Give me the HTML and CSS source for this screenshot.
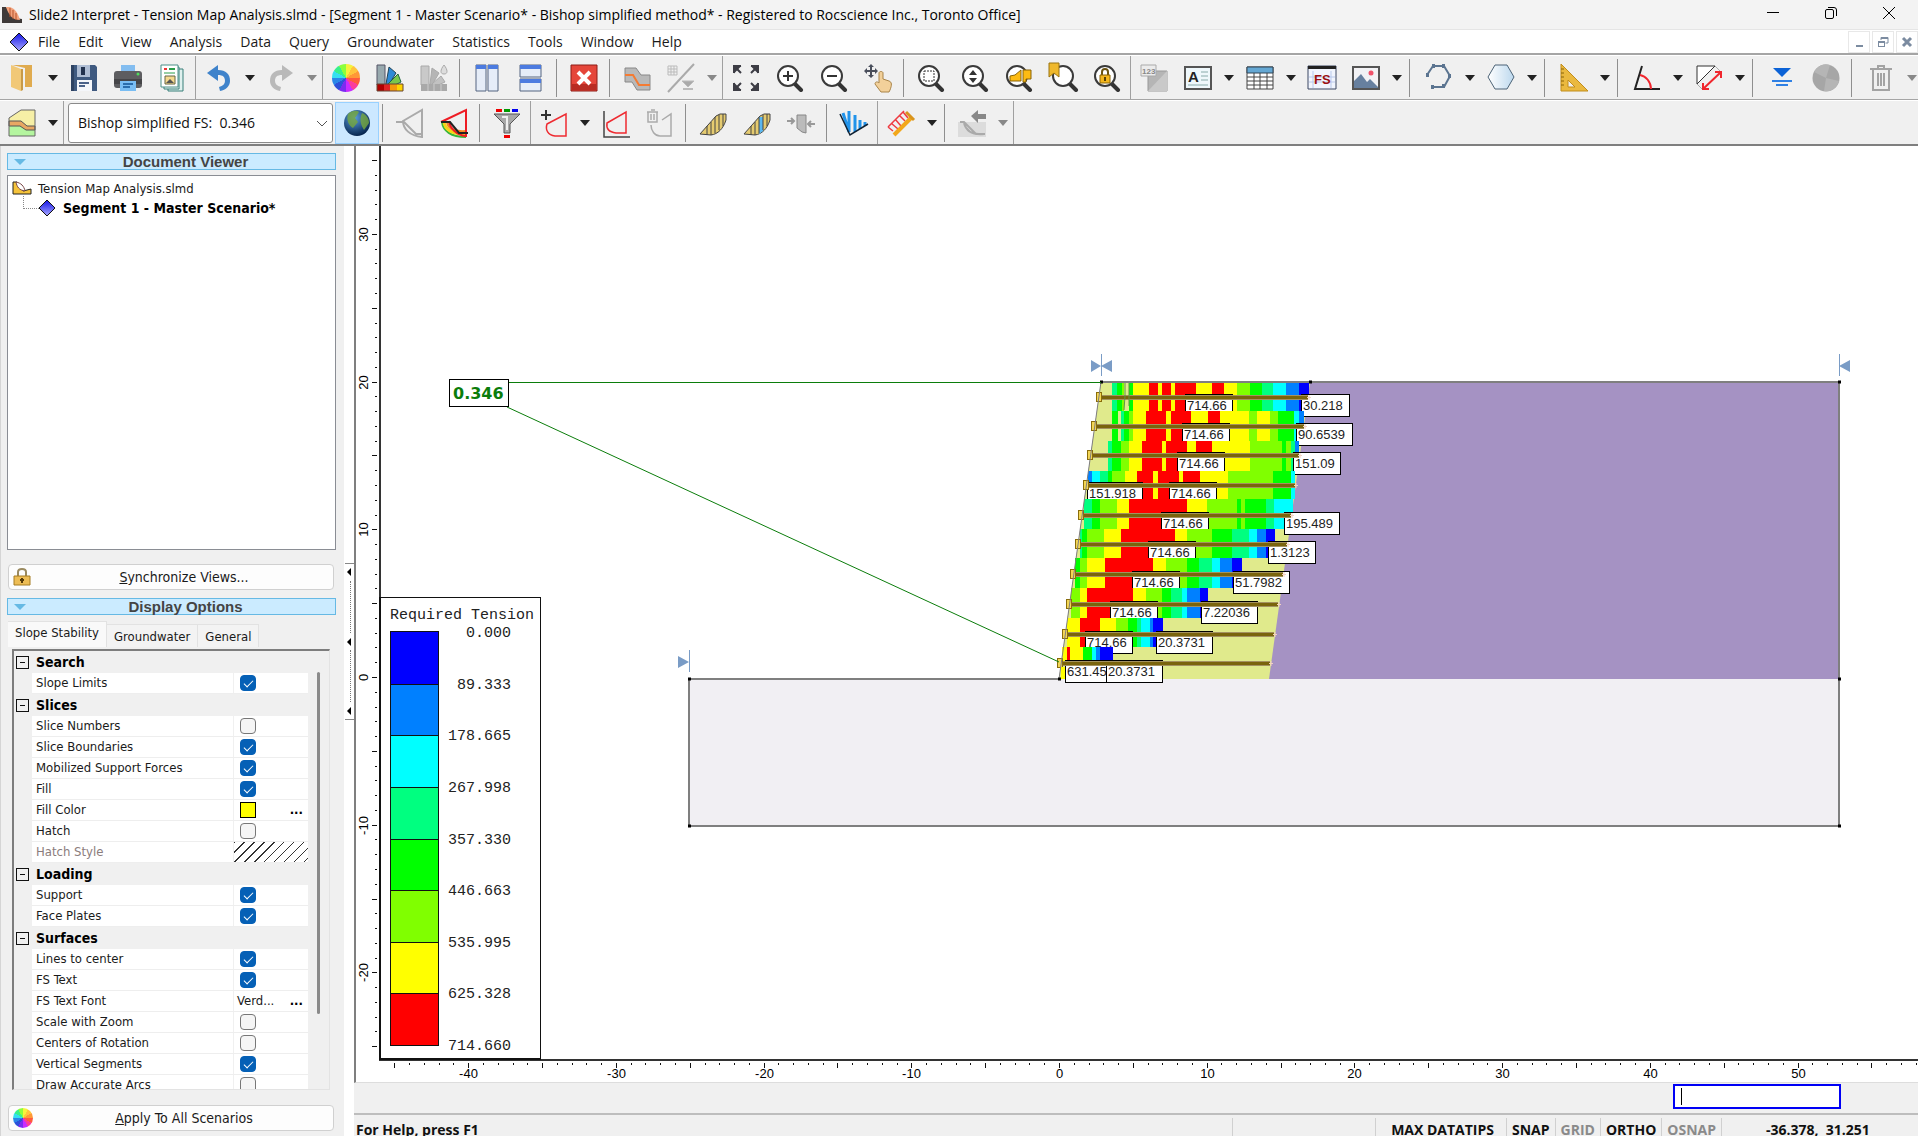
FILE: index.html
```
<!DOCTYPE html>
<html lang="en">

<head>
    <meta charset="UTF-8">
    <title>Slide2 Interpret</title>
    <link rel="stylesheet" href="styles.css">
</head>

<body>
    <!-- Shared icon parts -->
    <svg class="defs" aria-hidden="true">
        <defs>
            <symbol id="lens" viewBox="0 0 28 28">
                <path d="M19 20l6 6" stroke="#333" stroke-width="4" stroke-linecap="round" />
                <circle cx="12" cy="12" r="10" fill="#fff" stroke="#3a3a3a" stroke-width="2" />
            </symbol>
            <linearGradient id="gem" x1="0" y1="0" x2="0" y2="1">
                <stop offset="0" stop-color="#1414e6" />
                <stop offset="1" stop-color="#a9a9ff" />
            </linearGradient>
            <radialGradient id="sea" cx=".4" cy=".3" r=".7">
                <stop offset="0" stop-color="#5b9fe0" />
                <stop offset="1" stop-color="#07264f" />
            </radialGradient>
            <linearGradient id="frost">
                <stop offset="0" stop-color="#fff" />
                <stop offset="1" stop-color="#bcd8ee" />
            </linearGradient>
        </defs>
    </svg>

    <!-- Title bar -->
    <header class="title-bar">
        <svg class="app-icon" width="20" height="18" viewBox="0 0 20 18">
            <path d="M0 1l4 0 9 11 7 1v4H0z" fill="#3f3a39" />
            <path d="M4 1h4c6 2 8 7 10 13-7 0-11-4-14-13z" fill="#f2a27c" />
            <path d="M8 2v9M11 4v9M14 7v7" stroke="#b4532b" />
        </svg>
        <span class="title">Slide2 Interpret - Tension Map Analysis.slmd - [Segment 1 - Master Scenario* - Bishop simplified method* - Registered to Rocscience Inc., Toronto Office]</span>
        <div class="window-buttons">
            <button aria-label="Minimize"><svg width="14" height="14" viewBox="0 0 14 14"><path d="M1 6.500h12" stroke="#000" /></svg></button>
            <button aria-label="Restore"><svg width="14" height="14" viewBox="0 0 14 14" fill="none" stroke="#000"><rect x="1.500" y="3.500" width="8" height="9" rx="1.500" /><path d="M4 1.500h6a2.500 2.500 0 0 1 2.500 2.500v6" /></svg></button>
            <button aria-label="Close"><svg width="14" height="14" viewBox="0 0 14 14"><path d="M1 1l12 12M13 1L1 13" stroke="#000" /></svg></button>
        </div>
    </header>

    <!-- Menu -->
    <nav class="menu-bar">
        <svg width="20" height="20" viewBox="0 0 20 20"><path d="M10 1l9 9-9 9-9-9z" fill="url(#gem)" stroke="#111" /></svg>
        <button>File</button>
        <button>Edit</button>
        <button>View</button>
        <button>Analysis</button>
        <button>Data</button>
        <button>Query</button>
        <button>Groundwater</button>
        <button>Statistics</button>
        <button>Tools</button>
        <button>Window</button>
        <button>Help</button>
        <div class="mdi-buttons">
            <button aria-label="Minimize view"><svg width="12" height="12"><path d="M3 10h7" stroke="#7b8ba0" stroke-width="2" /></svg></button>
            <button aria-label="Restore view"><svg width="12" height="12" fill="none" stroke="#7b8ba0"><path d="M4 4V1.500h7V7H8.500M4 2.500h7" /><rect x="1.500" y="5.500" width="6" height="5" /><path d="M1 6.500h7" /></svg></button>
            <button aria-label="Close view"><svg width="12" height="12"><path d="M2 2l8 8M10 2l-8 8" stroke="#7b8ba0" stroke-width="3" /></svg></button>
        </div>
    </nav>

    <!-- Main toolbar -->
    <div class="toolbar">
        <div class="group">
            <button class="tool" aria-label="Open"><svg viewBox="0 0 28 28"><path d="M4 1h20v22h-7V4z" fill="#e0ab4f" /><path d="M3 1l10 4v22L3 23z" fill="#f1c877" /><path d="M13 5h2v21l-2 1z" fill="#c89a48" /></svg></button>
            <button class="drop" aria-label="Open recent"></button>
            <button class="tool" aria-label="Save"><svg viewBox="0 0 28 28"><path d="M1 1h24l2 2v24H1z" fill="#3f5a80" /><path d="M1 1h3v26H1z" fill="#2d4262" /><path d="M7 1h13v12H7z" fill="#aebdd4" /><path d="M11 3h4v8h-4z" fill="#22324e" /><path d="M7 16h15v11H7z" fill="#f4f6fa" /><path d="M9 19h10M9 22h6" stroke="#4a6289" stroke-width="2" /></svg></button>
            <button class="tool" aria-label="Print"><svg viewBox="0 0 28 28"><path d="M7 1h14v8H7z" fill="#83bdf0" /><rect y="7" width="28" height="17" rx="3" fill="#5d5d60" /><path d="M0 15h28v5H0z" fill="#454548" /><circle cx="24" cy="10" r="1.500" fill="#4fdc5e" /><path d="M6 17h16v10H6z" fill="#79bdf3" /><path d="M9 20h10M9 23h7" stroke="#2a6dad" stroke-width="2" /></svg></button>
            <button class="tool" aria-label="Report"><svg viewBox="0 0 28 28"><path d="M10 5h15v22H10z" fill="#dff0ee" stroke="#367f79" /><path d="M6 3h15v22H6z" fill="#e9f5f3" stroke="#367f79" /><path d="M3 1h17v22H3z" fill="#fff" stroke="#4b8f88" /><path d="M6 5h3" stroke="#e33" stroke-width="2" /><path d="M11 5h6" stroke="#2a9d4b" stroke-width="2" /><path d="M6 9h11" stroke="#2a9d4b" /><path d="M7 12h10v8H7z" fill="#f5d98e" stroke="#664" /><path d="M8 19l4-4 4 4z" fill="#555" /></svg></button>
        </div>
        <div class="group">
            <button class="tool" aria-label="Undo"><svg viewBox="0 0 28 28"><path d="M2 9L13 1v5c8 0 12 4 12 11 0 5-4 9-10 10l-1-4c4-1 6-3 6-6 0-4-2-6-7-6v6z" fill="#3f83cb" /></svg></button>
            <button class="drop" aria-label="Undo list"></button>
            <button class="tool" aria-label="Redo"><svg viewBox="0 0 28 28"><path d="M26 9L15 1v5C7 6 3 10 3 17c0 5 4 9 10 10l1-4c-4-1-6-3-6-6 0-4 2-6 7-6v6z" fill="#b9b9b9" /></svg></button>
            <button class="drop dim" aria-label="Redo list"></button>
        </div>
        <div class="group">
            <button class="tool" aria-label="Colors"><span class="wheel"></span></button>
            <button class="tool" aria-label="Palette"><svg viewBox="0 0 28 28"><path d="M1 1h8v20H1z" fill="#98a9ae" stroke="#556" /><path d="M10 20L13 3l7 6-8 13z" fill="#2f8ad6" stroke="#245" /><path d="M12 20l10-10 3 8-10 5z" fill="#7ac74c" stroke="#264" /><path d="M1 20h7v7H1z" fill="#b00000" /><path d="M8 20h6v7H8z" fill="#e02525" /><path d="M14 20h7v7h-7z" fill="#f59a0c" /><path d="M21 20h6v7h-6z" fill="#ffd400" /><path d="M1 20h26v7H1z" fill="none" stroke="#643" /></svg></button>
            <button class="tool" aria-label="Palette options"><svg viewBox="0 0 28 28"><path d="M1 2h8v19H1z" fill="#c9c9c9" stroke="#aaa" /><path d="M10 20L12 4l7 5-7 12z" fill="#b5b5b5" stroke="#aaa" /><path d="M12 20l9-8 4 6-9 4z" fill="#c2c2c2" stroke="#aaa" /><path d="M1 20h26v7H1z" fill="#a9a9a9" /><path d="M8 20v7M14 20v7M21 20v7" stroke="#ccc" /><path d="M24 1c4 5 4 9 0 9s-4-4 0-9z" fill="#ddd" stroke="#aaa" /></svg></button>
            <i class="sep"></i>
            <button class="tool" aria-label="Tile vertically"><svg viewBox="0 0 28 28"><path d="M3 1h10v26H3zM15 1h10v26H15z" fill="#e6edf8" stroke="#556480" /><path d="M3 1h10v4H3zM15 1h10v4H15z" fill="#4c7be0" /></svg></button>
            <button class="tool" aria-label="Tile horizontally"><svg viewBox="0 0 28 28"><path d="M3 1h21v12H3zM3 15h21v12H3z" fill="#e6edf8" stroke="#556480" /><path d="M3 1h21v4H3zM3 15h21v4H3z" fill="#4c7be0" /></svg></button>
            <i class="sep"></i>
            <button class="tool" aria-label="Stop"><svg viewBox="0 0 28 28"><path d="M1 1h26v26H1z" fill="#e5463a" stroke="#8d1d17" /><path d="M2 20h24v6H2z" fill="#b92c23" /><path d="M8 8l12 12M20 8L8 20" stroke="#fff" stroke-width="4" /></svg></button>
            <i class="sep"></i>
            <button class="tool" aria-label="Material boundary"><svg viewBox="0 0 28 28"><path d="M2 4h11l5 7h9v15H14L9 18H2z" fill="#b9b9b9" stroke="#888" /><path d="M2 11h8l6 10h11" fill="none" stroke="#f47b33" stroke-width="2" /></svg></button>
            <button class="tool" aria-label="Toggle grid"><svg viewBox="0 0 28 28" fill="none" stroke="#bbb"><path d="M1 2h9v9H1zM4 2v9M7 2v9M1 5h9M1 8h9" /><path d="M27 0L1 28" stroke="#aaa" stroke-width="2" /><path d="M15 17h12l-6 6z" fill="#aaa" /><path d="M16 25h10" stroke-width="2" /></svg></button>
            <button class="drop dim" aria-label="Grid options"></button>
        </div>
        <div class="group">
            <button class="tool" aria-label="Zoom all"><svg viewBox="0 0 28 28" fill="none" stroke="#3d3d45" stroke-width="2"><path d="M2 9V2h7M3 3l6 6M19 2h7v7M25 3l-6 6M2 19v7h7M3 25l6-6M19 26h7v-7M25 25l-6-6" /><path d="M3 3h4L3 7zM25 3h-4l4 4zM3 25v-4l4 4zM25 25v-4l-4 4z" fill="#3d3d45" /></svg></button>
            <button class="tool" aria-label="Zoom in"><svg viewBox="0 0 28 28"><use href="#lens" /><path d="M7 12h10M12 7v10" stroke="#333" stroke-width="2" /></svg></button>
            <button class="tool" aria-label="Zoom out"><svg viewBox="0 0 28 28"><use href="#lens" /><path d="M7 12h10" stroke="#333" stroke-width="2" /></svg></button>
            <button class="tool" aria-label="Pan"><svg viewBox="0 0 28 28"><path d="M7 0l3 3H8v3h3V4l3 3-3 3V8H8v3h2l-3 3-3-3h2V8H3v2L0 7l3-3v2h3V3H4z" fill="#4a4f5c" /><path d="M15 9c0-2 4-2 4 0v6l6 2c3 1 3 4 1 9l-1 2h-8l-6-8c0-2 2-3 4-1z" fill="#f2d09a" stroke="#a98448" /></svg></button>
            <i class="sep"></i>
            <button class="tool" aria-label="Zoom window"><svg viewBox="0 0 28 28"><use href="#lens" /><path d="M7 7h10v10H7z" fill="none" stroke="#333" stroke-dasharray="2 1" /></svg></button>
            <button class="tool" aria-label="Zoom vertical"><svg viewBox="0 0 28 28"><use href="#lens" /><path d="M8 11l4-5 4 5zM8 14l4 5 4-5z" fill="#333" /></svg></button>
            <button class="tool" aria-label="Zoom slope"><svg viewBox="0 0 28 28"><use href="#lens" /><path d="M5 12l5-1 6-5v11H5z" fill="#fdbb12" stroke="#8a6508" /><path d="M18 6h8v9h-5v3h-3z" fill="#fdbb12" stroke="#8a6508" /></svg></button>
            <button class="tool" aria-label="Zoom bookmark"><svg viewBox="0 0 28 28"><g transform="translate(2 0)"><use href="#lens" width="28" height="28" /></g><path d="M0-1h10v14l-5-4-5 4z" fill="#efb82c" stroke="#9a7412" /></svg></button>
            <button class="tool" aria-label="Zoom lock"><svg viewBox="0 0 28 28"><use href="#lens" /><path d="M9 11V8c0-4 6-4 6 0v3" fill="none" stroke="#6b5310" stroke-width="2" /><path d="M7 11h10v8H7z" fill="#f4b71d" stroke="#8a6508" /><path d="M12 13v4" stroke="#5b4305" stroke-width="2" /></svg></button>
        </div>
        <div class="group last">
            <button class="tool" aria-label="Show values"><svg viewBox="0 0 28 28"><path d="M8 7h19v20H8z" fill="#b5b5b5" stroke="#999" /><path d="M8 27L27 7v20z" fill="#c9c9c9" /><path d="M1 1h15v11H1z" fill="#ececec" stroke="#aaa" /><text x="2" y="10" font-size="8" class="icon-text" fill="#888">123</text></svg></button>
            <button class="tool" aria-label="Add text"><svg viewBox="0 0 28 28"><path d="M1 3h26v22H1z" fill="#eef7fb" stroke="#555" stroke-width="2" /><text x="4" y="18" font-size="15" class="icon-text" fill="#222">A</text><path d="M17 8h7M17 12h7M17 16h7M4 21h20" stroke="#8aa" /></svg></button>
            <button class="drop" aria-label="Text options"></button>
            <button class="tool" aria-label="Add table"><svg viewBox="0 0 28 28"><path d="M1 3h26v22H1z" fill="#fff" stroke="#444" /><path d="M1 3h26v6H1z" fill="#65a8d4" stroke="#345" /><path d="M1 13h26M1 17h26M1 21h26M8 9v16M14 9v16M21 9v16" stroke="#444" /></svg></button>
            <button class="drop" aria-label="Table options"></button>
            <button class="tool" aria-label="Factor of safety"><svg viewBox="0 0 28 28"><path d="M0 2h28v23H0z" fill="#f1f5fd" stroke="#3a4663" /><path d="M1 13h26M1 18h26M5 7v17M23 7v17" stroke="#b9c9ec" /><path d="M0 2h28v3H0z" fill="#222" /><text x="6" y="20" font-size="13" class="icon-text" fill="#9b1010">FS</text></svg></button>
            <button class="tool" aria-label="Add image"><svg viewBox="0 0 28 28"><path d="M1 3h26v22H1z" fill="#f2f2f5" stroke="#555" stroke-width="2" /><path d="M2 17l7-7 6 8 3-3 8 8v1H2z" fill="#67809f" /><circle cx="19" cy="9" r="2.500" fill="#f0526a" /></svg></button>
            <button class="drop" aria-label="Image options"></button>
            <i class="sep"></i>
            <button class="tool" aria-label="Polyline"><svg viewBox="0 0 28 28" fill="none" stroke="#5b7490"><path d="M2 11l6-9h11l6 10-6 11H7" stroke-width="2" /><path d="M1 11h3M7 2h3M17 2h3M23 12h3M17 22h3M6 23h3" stroke-width="4" /></svg></button>
            <button class="drop" aria-label="Polyline options"></button>
            <button class="tool" aria-label="Polygon"><svg viewBox="0 0 28 28"><path d="M8 1h12l7 12-7 12H8L1 13z" fill="url(#frost)" stroke="#4c6377" /></svg></button>
            <button class="drop" aria-label="Polygon options"></button>
            <i class="sep"></i>
            <button class="tool" aria-label="Dimension"><svg viewBox="0 0 28 28"><path d="M1 0l27 27H1zM8 16v7h7z" fill="#eab93f" fill-rule="evenodd" stroke="#c18d1c" /><path d="M1 5h3M1 9h3M1 13h3M1 17h3M1 21h3" stroke="#8a6508" /></svg></button>
            <button class="drop" aria-label="Dimension options"></button>
            <i class="sep"></i>
            <button class="tool" aria-label="Angle"><svg viewBox="0 0 28 28" fill="none" stroke="#222" stroke-width="2"><path d="M9 2L2 25h25" /><path d="M7 11c6 1 11 7 11 14" stroke="#f0262d" /></svg></button>
            <button class="drop" aria-label="Angle options"></button>
            <button class="tool" aria-label="Measure"><svg viewBox="0 0 28 28"><path d="M2 2h18L2 20z" fill="#fff" stroke="#333" /><path d="M2 20l6 6M20 2l6 6" stroke="#aaa" /><path d="M8 25L26 8M8 19v6h6M20 8h6v6" fill="none" stroke="#f0262d" stroke-width="2" /></svg></button>
            <button class="drop" aria-label="Measure options"></button>
            <i class="sep"></i>
            <button class="tool" aria-label="Water table"><svg viewBox="0 0 28 28"><path d="M5 4h18l-9 9z" fill="#0b62d6" /><path d="M4 17h20M8 21h12" stroke="#2f80e4" stroke-width="2" /></svg></button>
            <button class="tool" aria-label="Contours"><svg viewBox="0 0 28 28"><circle cx="14" cy="14" r="13.500" fill="#a6a6a6" /><path d="M14 14L2 8a13 13 0 0 1 16-7zM14 14l13 3a13 13 0 0 1-15 10z" fill="#b5b5b5" /></svg></button>
            <i class="sep"></i>
            <button class="tool" aria-label="Delete"><svg viewBox="0 0 28 28" fill="none" stroke="#a3a3a3" stroke-width="2"><path d="M3 5h22M11 4V2h6v2M6 6v20h16V6M11 9v13M14 9v13M17 9v13" /></svg></button>
            <button class="drop dim" aria-label="Delete options"></button>
        </div>
    </div>

    <!-- Slope stability toolbar -->
    <div class="toolbar second">
        <div class="group">
            <button class="tool" aria-label="Data type"><svg viewBox="0 0 28 28"><path d="M1 9L13 1h14v26H1z" fill="#f6efa6" /><path d="M1 14h11l8 5h7v8H1z" fill="#b4f59f" /><path d="M1 12h12l6 5h8v4h-9l-6-4H1z" fill="#e8a763" stroke="#555" /><path d="M1 9L13 1h14v26H1z" fill="none" stroke="#666" /></svg></button>
            <button class="drop" aria-label="Data type options"></button>
        </div>
        <div class="group">
            <div class="method">
                <select aria-label="Analysis method">
                    <option>Bishop simplified FS:&nbsp; 0.346</option>
                </select>
                <svg width="12" height="8" viewBox="0 0 12 8"><path d="M1 1l5 5 5-5" fill="none" stroke="#555" /></svg>
            </div>
            <button class="tool on" aria-label="Global minimum"><svg viewBox="0 0 28 28"><circle cx="14" cy="14" r="13" fill="url(#sea)" /><path d="M5 5c4-4 9-4 11-2l-4 6 3 4-5 6c-4-2-7-8-5-14zM19 4c5 2 7 6 7 10l-5 7c-3-5-5-10-2-17z" fill="#76a83d" opacity=".8" /></svg></button>
            <i class="sep"></i>
            <button class="tool" aria-label="Minimum surfaces"><svg viewBox="0 0 28 28" fill="none" stroke="#aaa" stroke-width="2"><path d="M0 13h8l12 12h7M7 12L26 1v27C14 27 7 20 7 12z" /></svg></button>
            <button class="tool" aria-label="All surfaces"><svg viewBox="0 0 28 28" fill="none" stroke-width="2"><path d="M2 13c1 9 9 15 24 15" stroke="#38b638" /><path d="M4 13c1 8 9 12 22 12" stroke="#f7d417" stroke-width="3" /><path d="M7 13c1 6 6 10 19 9" stroke="#f58a1f" /><path d="M1 13L26 1v26C16 26 10 19 9 12" stroke="#ee1c24" /><path d="M1 13h9l9 11h9" stroke="#222" /></svg></button>
            <i class="sep"></i>
            <button class="tool" aria-label="Filter"><svg viewBox="0 0 28 28"><path d="M3 0h6v3H3z" fill="#e00" /><path d="M11 0h6v3h-6z" fill="#090" /><path d="M19 0h6v3h-6z" fill="#00e" /><path d="M1 5h26L17 15v9h-6v-9z" fill="#a8a8a8" stroke="#555" /><path d="M9 8h5v13" stroke="#eee" fill="none" stroke-width="2" /><path d="M11 26h6v3h-6z" fill="#e00" /></svg></button>
        </div>
        <div class="group">
            <button class="tool" aria-label="Add surface"><svg viewBox="0 0 28 28" fill="none"><path d="M1 6h10M6 1v10" stroke="#333" stroke-width="2" /><path d="M7 15l19-10v22H15c-7-1-10-6-8-12z" stroke="#ee2a30" stroke-width="1.500" /></svg></button>
            <button class="drop" aria-label="Add surface options"></button>
            <button class="tool" aria-label="Query surface"><svg viewBox="0 0 28 28" fill="none"><path d="M2 2v26h26" stroke="#444" stroke-width="1.500" /><path d="M5 14L24 3v21H14c-7-1-10-4-9-10z" stroke="#ee2a30" stroke-width="1.500" /></svg></button>
            <button class="tool" aria-label="Delete query"><svg viewBox="0 0 28 28" fill="none" stroke="#aaa" stroke-width="1.500"><path d="M1 3h11M5 1h4M2 3v10h9V3M5 5v6M8 5v6" /><path d="M5 16c0 6 4 11 9 11h11V5l-9 6" /></svg></button>
            <i class="sep"></i>
            <button class="tool" aria-label="Show slices"><svg viewBox="0 0 28 28"><path d="M1 25L17 7l4-2h6v6c-3 9-8 14-15 15z" fill="#e5cb70" stroke="#444" /><path d="M8 17v9M12 13v13M16 8v16M20 6v15M24 5v12" stroke="#444" /></svg></button>
            <button class="tool" aria-label="Query slice"><svg viewBox="0 0 28 28"><path d="M1 25L17 7l4-2h6v6c-3 9-8 14-15 15z" fill="#e5cb70" stroke="#444" /><path d="M16 8h4v14l-4 3z" fill="#5bb7ef" /><path d="M8 17v9M12 13v13M16 8v16M20 6v15M24 5v12" stroke="#444" /></svg></button>
            <button class="tool" aria-label="Interslice"><svg viewBox="0 0 28 28"><path d="M10 6h9v18l-4-1-5-4z" fill="#bbb" stroke="#888" /><path d="M0 12h7M4 9l3 3-3 3M28 15h-7M24 12l-3 3 3 3" fill="none" stroke="#999" stroke-width="2" /></svg></button>
            <i class="sep"></i>
            <button class="tool" aria-label="Graph slices"><svg viewBox="0 0 28 28" fill="none"><path d="M3 4l6 19M9 2v21M15 6v17M20 11v9M25 13v4" stroke="#2193ea" stroke-width="3" /><path d="M0 5l10 21 18-11" stroke="#123" stroke-width="1.500" /></svg></button>
        </div>
        <div class="group">
            <button class="tool" aria-label="Support forces"><svg viewBox="0 0 28 28" fill="none"><path d="M1 18L17 2M4 14l7 6M8 10l6 7M12 6l6 6M16 3l5 6M1 18l5 4" stroke="#ee3a40" stroke-width="1.500" /><path d="M7 26L25 8" stroke="#f2a71b" stroke-width="4" /><path d="M19 3l8 8" stroke="#d9941d" stroke-width="3" /></svg></button>
            <button class="drop" aria-label="Support options"></button>
            <i class="sep"></i>
            <button class="tool" aria-label="Seismic"><svg viewBox="0 0 28 28"><path d="M0 13h28v15H0z" fill="#dcdcdc" /><path d="M13 7l7-6v4h8v5h-8v4z" fill="#888" /><path d="M2 13h4l12 12h9M6 14c2 8 9 12 20 11" fill="none" stroke="#aaa" stroke-width="2" /></svg></button>
            <button class="drop dim" aria-label="Seismic options"></button>
        </div>
    </div>

    <div class="workspace">
        <!-- Left panel -->
        <aside class="side-panel">
            <h2 class="panel-title">Document Viewer</h2>
            <div class="tree">
                <div class="tree-root">
                    <svg width="20" height="14" viewBox="0 0 20 14"><path d="M1 1h4l6 9 8-2v5H1z" fill="#f5c33b" stroke="#222" /><path d="M4 1c5 1 8 4 9 9-6-1-8-4-9-9z" fill="#fff" stroke="#744" /></svg>
                    Tension Map Analysis.slmd
                </div>
                <div class="tree-child">
                    <svg width="18" height="18" viewBox="0 0 18 18"><path d="M9 1l8 8-8 8-8-8z" fill="url(#gem)" stroke="#111" /></svg>
                    Segment 1 - Master Scenario*
                </div>
            </div>
            <button class="wide-button sync">
                <svg width="18" height="18" viewBox="0 0 18 18"><path d="M5 8V4c0-4 8-4 8 0v4" fill="none" stroke="#9a8a60" stroke-width="2" /><path d="M1 8h16v9H1z" fill="#edbd55" stroke="#a67c22" /><path d="M9 10v5M7 12h4" stroke="#553a08" stroke-width="2" /></svg>
                <span><u>S</u>ynchronize Views...</span>
            </button>
            <h2 class="panel-title">Display Options</h2>
            <div class="tabs" role="tablist">
                <button class="active" role="tab">Slope Stability</button>
                <button role="tab">Groundwater</button>
                <button role="tab">General</button>
            </div>
            <div class="options">
                <div class="list">
                    <h3>Search</h3>
                    <div class="row"><label for="slope-limits">Slope Limits</label><div><input type="checkbox" id="slope-limits" checked></div></div>
                    <h3>Slices</h3>
                    <div class="row"><label for="slice-numbers">Slice Numbers</label><div><input type="checkbox" id="slice-numbers"></div></div>
                    <div class="row"><label for="slice-bounds">Slice Boundaries</label><div><input type="checkbox" id="slice-bounds" checked></div></div>
                    <div class="row"><label for="mobilized">Mobilized Support Forces</label><div><input type="checkbox" id="mobilized" checked></div></div>
                    <div class="row"><label for="fill">Fill</label><div><input type="checkbox" id="fill" checked></div></div>
                    <div class="row"><label for="fill-color">Fill Color</label><div><span class="swatch"></span><button class="more" id="fill-color">...</button></div></div>
                    <div class="row"><label for="hatch">Hatch</label><div><input type="checkbox" id="hatch"></div></div>
                    <div class="row off"><span>Hatch Style</span><div class="hatch"></div></div>
                    <h3>Loading</h3>
                    <div class="row"><label for="support">Support</label><div><input type="checkbox" id="support" checked></div></div>
                    <div class="row"><label for="plates">Face Plates</label><div><input type="checkbox" id="plates" checked></div></div>
                    <h3>Surfaces</h3>
                    <div class="row"><label for="center-lines">Lines to center</label><div><input type="checkbox" id="center-lines" checked></div></div>
                    <div class="row"><label for="fs-text">FS Text</label><div><input type="checkbox" id="fs-text" checked></div></div>
                    <div class="row"><label for="fs-font">FS Text Font</label><div><span>Verd...</span><button class="more" id="fs-font">...</button></div></div>
                    <div class="row"><label for="scale-zoom">Scale with Zoom</label><div><input type="checkbox" id="scale-zoom"></div></div>
                    <div class="row"><label for="centers">Centers of Rotation</label><div><input type="checkbox" id="centers"></div></div>
                    <div class="row"><label for="segments">Vertical Segments</label><div><input type="checkbox" id="segments" checked></div></div>
                    <div class="row"><label for="arcs">Draw Accurate Arcs</label><div><input type="checkbox" id="arcs"></div></div>
                </div>
                <div class="scroll"></div>
            </div>
            <button class="wide-button apply">
                <span class="wheel"></span>
                <span><u>A</u>pply To All Scenarios</span>
            </button>
        </aside>

        <div class="splitter">
            <div class="grip"><i></i><b></b><i></i><b></b><i></i></div>
        </div>

        <main class="main">
            <div class="view">
                <svg class="drawing" id="drawing"></svg>
                <div class="legend">
                    <div class="legend-title">Required Tension</div>
                    <div class="legend-body">
                        <div class="ramp">
                            <i class="c0"></i><i class="c1"></i><i class="c2"></i><i class="c3"></i><i class="c4"></i><i class="c5"></i><i class="c6"></i><i class="c7"></i>
                        </div>
                        <div class="ramp-values">
                            <span>0.000</span>
                            <span>89.333</span>
                            <span>178.665</span>
                            <span>267.998</span>
                            <span>357.330</span>
                            <span>446.663</span>
                            <span>535.995</span>
                            <span>625.328</span>
                            <span>714.660</span>
                        </div>
                    </div>
                </div>
            </div>
            <div class="prompt">
                <input type="text" aria-label="Command">
            </div>
            <footer class="status-bar">
                <span class="help">For Help, press F1</span>
                <span class="pane blank"></span>
                <span class="pane tips">MAX DATATIPS</span>
                <span class="pane">SNAP</span>
                <span class="pane gray">GRID</span>
                <span class="pane">ORTHO</span>
                <span class="pane gray">OSNAP</span>
                <span class="pane blank-small"></span>
                <span class="coords">-36.378,&nbsp; 31.251</span>
            </footer>
        </main>
    </div>

    <script src="drawing.js"></script>
</body>

</html>
```
FILE: styles.css
```
* {
    box-sizing: border-box;
}

body {
    margin: 0;
    height: 100vh;
    display: flex;
    flex-direction: column;
    overflow: hidden;
    background: #fff;
    color: #1a1a1a;
    font-family: "Open Sans", sans-serif;
    font-size: 14px;
}

button {
    margin: 0;
    padding: 0;
    border: 0;
    background: none;
    font: inherit;
    color: inherit;
}

.defs {
    position: absolute;
    width: 0;
    height: 0;
}

/* Title bar */
.title-bar {
    display: flex;
    align-items: center;
    flex: none;
    height: 30px;
    padding-left: 2px;
    gap: 7px;
    background: #f3f3f3;
    border-bottom: 1px solid #e5e5e5;
    white-space: nowrap;
}

.title {
    flex: 1;
    color: #000;
}

.window-buttons {
    display: flex;
}

.window-buttons button {
    width: 58px;
    height: 28px;
}

/* Menu */
.menu-bar {
    display: flex;
    align-items: center;
    flex: none;
    height: 25px;
    padding-left: 9px;
    border-bottom: 2px solid #a5a5a5;
}

.menu-bar > button {
    padding: 0 9px;
}

.mdi-buttons {
    display: flex;
    gap: 2px;
    margin-left: auto;
}

.mdi-buttons button {
    display: grid;
    place-items: center;
    width: 22px;
    height: 22px;
    border: 1px solid #e8e8e8;
}

/* Toolbars */
.toolbar {
    display: flex;
    flex: none;
    height: 45px;
    background: #f0f0f0;
    border-top: 1px solid #fff;
    border-bottom: 1px solid #a5a5a5;
}

.toolbar.second {
    height: 46px;
    border-bottom: 2px solid #7f7f7f;
}

.group {
    display: flex;
    align-items: center;
    flex: none;
    border-right: 1px solid #a0a0a0;
    padding-right: 1px;
    margin-right: 1px;
}

.group.last {
    border: 0;
}

.tool {
    display: grid;
    place-items: center;
    width: 44px;
    height: 42px;
}

.tool svg {
    width: 28px;
    height: 28px;
    overflow: visible;
}

.tool.on {
    background: #cce8ff;
    border: 1px solid #99d1ff;
}

.drop {
    display: grid;
    place-items: center;
    width: 18px;
    height: 42px;
}

.drop::after {
    content: "";
    border: 5px solid transparent;
    border-top: 6px solid #222;
    border-bottom: 0;
}

.drop.dim::after {
    border-top-color: #888;
}

.sep {
    width: 9px;
    height: 38px;
    border-left: 1px solid #8f8f8f;
    margin-left: 3px;
    margin-right: -3px;
}

.last .sep {
    width: 11px;
}

.icon-text {
    font-family: "Liberation Sans", sans-serif;
    font-weight: bold;
}

.wheel {
    width: 28px;
    height: 28px;
    border-radius: 50%;
    background: conic-gradient(#f6f23c 30deg, #ffc43c 0 60deg, #ff9836 0 90deg, #ff5a3c 0 120deg, #fb3c9b 0 150deg, #c82cff 0 180deg, #7a2cf0 0 210deg, #2d50d8 0 240deg, #2a86e8 0 270deg, #35dff0 0 300deg, #38f08c 0 330deg, #8cff3c 0);
}

.method {
    position: relative;
    width: 265px;
    margin: 0 2px 0 3px;
}

.method select {
    appearance: none;
    width: 100%;
    height: 40px;
    padding: 0 9px;
    border: 1px solid #8a8a8a;
    border-radius: 3px;
    background: #fff;
    color: #111;
    font: inherit;
}

.method svg {
    position: absolute;
    right: 5px;
    top: 17px;
}

/* Left panel */
.workspace {
    display: flex;
    flex: 1;
    min-height: 0;
}

.side-panel {
    display: flex;
    flex-direction: column;
    flex: none;
    width: 344px;
    padding: 7px 8px 5px 6px;
    background: #f0f0f0;
    border-left: 1px solid #d5d5d5;
    font-family: "DejaVu Sans Condensed", "DejaVu Sans", sans-serif;
    font-size: 13px;
}

.panel-title {
    position: relative;
    flex: none;
    height: 17px;
    margin: 0;
    border: 1px solid #66b9e4;
    background: #cbebff;
    color: #444;
    font: bold 15px/15px "Liberation Sans", sans-serif;
    text-align: center;
    padding-left: 28px;
}

.panel-title::before {
    content: "";
    position: absolute;
    left: 6px;
    top: 5px;
    border: 6px solid transparent;
    border-top-color: #66b9e4;
    border-bottom: 0;
}

.tree {
    flex: 1;
    margin: 5px 0 14px;
    padding: 2px 4px;
    background: #fff;
    border: 1px solid #8a8d94;
}

.tree-root,
.tree-child {
    display: flex;
    align-items: center;
    gap: 6px;
    height: 20px;
}

.tree-child {
    position: relative;
    gap: 7px;
    padding-left: 26px;
    color: #000;
    font-size: 14px;
    font-weight: bold;
}

.tree-child::before {
    content: "";
    position: absolute;
    left: 11px;
    top: -2px;
    width: 15px;
    height: 12px;
    border-left: 1px dotted #888;
    border-bottom: 1px dotted #888;
}

.wide-button {
    display: flex;
    align-items: center;
    justify-content: center;
    position: relative;
    flex: none;
    height: 26px;
    margin: 0 2px 8px 1px;
    padding-left: 26px;
    background: #fdfdfd;
    border: 1px solid #d0d0d0;
    border-radius: 4px;
    font-size: 14px;
}

.wide-button svg,
.wide-button .wheel {
    position: absolute;
    left: 4px;
}

.wide-button .wheel {
    width: 20px;
    height: 20px;
}

.wide-button.apply {
    margin-bottom: 0;
}

.tabs {
    display: flex;
    align-items: flex-end;
    flex: none;
    height: 32px;
    margin-left: 1px;
}

.tabs button {
    height: 23px;
    padding: 0 7px;
    border: 1px solid #e2e2e2;
    border-bottom: 0;
    border-left: 0;
    background: #f3f3f3;
}

.tabs .active {
    height: 26px;
    padding-bottom: 4px;
    background: #f9f9f9;
}

.options {
    display: flex;
    flex: none;
    height: 441px;
    margin: 2px 6px 15px 5px;
    overflow: hidden;
    border: 2px solid #7d7d7d;
    border-right: 1px solid #e3e3e3;
    border-bottom: 1px solid #e3e3e3;
}

.list {
    flex: 1;
    padding-left: 18px;
}

.list h3 {
    position: relative;
    height: 22px;
    margin: 0;
    padding-left: 4px;
    color: #000;
    font-size: 14px;
    line-height: 22px;
}

.list h3::before {
    content: "";
    position: absolute;
    left: -16px;
    top: 5px;
    width: 11px;
    height: 11px;
    border: 1px solid #111;
    background: linear-gradient(#111, #111) center / 5px 1px no-repeat;
}

.row {
    display: grid;
    grid-template-columns: 1fr 74px;
    column-gap: 1px;
    height: 21px;
    line-height: 20px;
    border-bottom: 1px solid #eee;
}

.row > * {
    background: #fff;
}

.row > :first-child {
    padding-left: 4px;
}

.row > div {
    display: flex;
    align-items: center;
    padding: 0 5px 0 3px;
}

.row.off {
    color: #8b7c7c;
}

.row input,
.swatch {
    width: 16px;
    height: 16px;
    margin: 0 0 0 3px;
}

.row input {
    appearance: none;
    display: grid;
    place-items: center;
    border: 1px solid #777;
    border-radius: 4px;
    background: #f5f5f5;
}

.row input:checked {
    border-color: #0560b6;
    background: #0560b6;
}

.row input:checked::after {
    content: "";
    width: 8px;
    height: 4px;
    margin-bottom: 2px;
    border: solid #fff;
    border-width: 0 0 1px 1px;
    transform: rotate(-45deg);
}

.swatch {
    border: 1px solid #000;
    background: #ff0;
}

.more {
    margin-left: auto;
    color: #000;
    font-weight: bold;
}

.row .hatch {
    background: repeating-linear-gradient(135deg, #333 0 1px, #fff 1px 7px);
}

.scroll {
    width: 21px;
    padding: 21px 0 0 9px;
}

.scroll::before {
    content: "";
    display: block;
    width: 3px;
    height: 342px;
    border-radius: 2px;
    background: #8a8a8a;
}

/* Splitter */
.splitter {
    display: flex;
    align-items: flex-start;
    flex: none;
    width: 10px;
    padding: 417px 0 0 1px;
}

.grip {
    display: flex;
    flex-direction: column;
    justify-content: space-between;
    align-items: flex-end;
    width: 9px;
    height: 157px;
    padding: 4px 3px;
    border: solid #888;
    border-width: 1px 0;
}

.grip i {
    border: 4px solid transparent;
    border-right-color: #000;
    border-left: 0;
}

.grip b {
    height: 52px;
    border-left: 1px dotted #777;
}

/* Drawing */
.main {
    display: flex;
    flex-direction: column;
    flex: 1;
    min-width: 0;
    background: #f0f0f0;
}

.view {
    position: relative;
    flex: 1;
    min-height: 0;
    overflow: hidden;
    background: #fff;
    border-left: 2px solid #7f7f7f;
    border-bottom: 1px solid #ddd;
}

.drawing {
    display: block;
    width: 100%;
    height: 100%;
    font-family: "Liberation Sans", sans-serif;
    font-size: 13px;
}

.fs-value {
    font: bold 16px "DejaVu Sans", sans-serif;
}

.legend {
    position: absolute;
    left: 23px;
    bottom: 22px;
    width: 162px;
    padding: 8px 9px 12px;
    background: #fff;
    border: 1px solid #111;
    border-left-width: 2px;
    border-bottom-width: 2px;
    color: #222;
    font: 15px/20px "Liberation Mono", monospace;
    white-space: nowrap;
}

.legend-body {
    display: flex;
    margin-top: 5px;
}

.ramp {
    display: grid;
    grid-template-rows: repeat(8, 1fr);
    width: 49px;
    height: 415px;
    border: 1px solid #111;
}

.ramp i + i {
    border-top: 1px solid #111;
}

.c0 { background: #0000ff; }
.c1 { background: #0080ff; }
.c2 { background: #00ffff; }
.c3 { background: #00ff80; }
.c4 { background: #00ff00; }
.c5 { background: #80ff00; }
.c6 { background: #ffff00; }
.c7 { background: #ff0000; }

.ramp-values {
    display: flex;
    flex-direction: column;
    justify-content: space-between;
    width: 72px;
    margin: -7px 0 -11px;
    text-align: right;
}

/* Command prompt and status bar */
.prompt {
    display: flex;
    justify-content: flex-end;
    flex: none;
    height: 32px;
    padding: 1px 77px 0 0;
    border-bottom: 2px solid #bdbdbd;
}

.prompt input {
    width: 168px;
    height: 25px;
    padding: 2px 6px;
    border: 2px solid #0000f5;
    outline: 0;
    background: linear-gradient(#000, #000) 6px 2px / 1px 17px no-repeat #fff;
    font-size: 16px;
}

.status-bar {
    display: flex;
    flex: none;
    height: 21px;
    padding-left: 2px;
    overflow: hidden;
    color: #111;
    font-weight: bold;
    line-height: 30px;
    white-space: nowrap;
}

.help {
    flex: 1;
}

.pane {
    padding: 0 5px;
    margin-top: 3px;
    line-height: 24px;
    border-left: 1px solid #d0d0d0;
}

.blank {
    width: 143px;
}

.tips {
    padding: 0 12px 0 15px;
}

.gray {
    color: #8a8a8a;
}

.blank-small {
    width: 45px;
}

.coords {
    width: 152px;
}
```
FILE: drawing.js
```
const svg = document.getElementById('drawing');
const SVG_NS = 'http://www.w3.org/2000/svg';

// screen position of world 0,0 and pixels per metre
const originX = 703;
const originY = 533;
const scale = 14.77;

const colors = {
    b: '#0000ff', a: '#0080ff', C: '#00ffff', s: '#00ff80',
    g: '#00ff00', c: '#80ff00', y: '#ffff00', r: '#ff0000', p: '#e0ea8c'
};

// top of the band, left edge, then color + right edge of each slice
const bands = [
    [-297, 53, 's58 g63 c65 p70 g74 y90 r99 y103 r112 y116 r137 y153 r165 y178 c191 g203 s214 C227 a240 b250'],
    [-268, 53, 'g59 p62 s65 g70 c74 y87 r107 y112 r132 y149 r161 y190 c198 y211 c219 g235 C240 a245'],
    [-238, 49, 's53 g62 c70 y83 r103 y107 r128 y137 r153 y191 c223 g227 c232 s236 a240'],
    [-208, 29, 'a33 C41 s49 g53 c66 y78 r94 y99 r120 y124 r141 y169 c214 g232 C236'],
    [-180, 25, 's33 g41 c58 y70 r128 y148 c178 g182 c186 g207 s215 C234'],
    [-150, 21, 's23 g28 c45 y62 r116 y128 c153 g173 s190 C198 a207 b216'],
    [-121, 16, 'g21 c28 y46 r94 y107 c128 g140 s153 C161 a173 b183'],
    [-91, 12, 'c21 y28 r74 y87 c103 g112 s123 C128 a141 b149'],
    [-61, 8, 'y21 r41 y57 c69 g78 s82 C91 a94 b104'],
    [-32, 3, 'y8 r11 y24 g33 C37 a41 b54'],
    [-18]
];

// y, start x, end x, then the values shown under the bolt
const bolts = [
    [-282, 40, 249, [[126, 47, '714.66'], [242, 48, '30.218']]],
    [-253, 35, 245, [[123, 47, '714.66'], [237, 56, '90.6539']]],
    [-224, 31, 240, [[118, 47, '714.66'], [234, 47, '151.09']]],
    [-194, 27, 236, [[28, 55, '151.918'], [110, 47, '714.66']]],
    [-164, 22, 232, [[102, 47, '714.66'], [225, 55, '195.489']]],
    [-135, 19, 228, [[89, 47, '714.66'], [209, 47, '1.3123']]],
    [-105, 14, 224, [[73, 47, '714.66'], [174, 56, '51.7982']]],
    [-75, 10, 219, [[51, 47, '714.66'], [142, 56, '7.22036']]],
    [-45, 6, 215, [[26, 47, '714.66'], [97, 56, '20.3731']]],
    [-16, 1, 211, [[6, 55, '631.453'], [47, 56, '20.3731']]]
];

function add(parent, name, attrs, text) {
    const el = document.createElementNS(SVG_NS, name);
    for (const key in attrs) {
        el.setAttribute(key, attrs[key]);
    }
    if (text) {
        el.textContent = text;
    }
    parent.appendChild(el);
    return el;
}

function drawBand(parent, band, bottom) {
    let x = band[1];
    for (const part of band[2].split(' ')) {
        const end = Number(part.slice(1));
        add(parent, 'rect', { x, y: band[0], width: end - x, height: bottom - band[0], fill: colors[part[0]] });
        x = end;
    }
}

function drawBolt(parent, [y, x1, x2, labels]) {
    for (const [x, width, text] of labels) {
        add(parent, 'rect', { x: x + 0.5, y: y - 2.5, width, height: 22, fill: '#fff', stroke: '#000' });
        add(parent, 'text', { x: x + 2, y: y + 13, fill: '#222' }, text);
    }
    add(parent, 'rect', { x: x1, y: y - 2, width: x2 - x1, height: 5, fill: '#a39160' });
    add(parent, 'rect', { x: x1, y: y - 1, width: x2 - x1, height: 3, fill: '#7a640c' });
    add(parent, 'path', { d: `M${x2 - 1} ${y + 0.5}h4M${x2 + 1} ${y - 2}v5`, stroke: '#f3d2c2' });
    add(parent, 'rect', { x: x1 - 2.5, y: y - 4.5, width: 5, height: 9, fill: '#f3d655', stroke: '#8a6d0b' });
}

function drawModel() {
    const g = add(svg, 'g', { transform: `translate(${originX} ${originY})` });
    add(g, 'path', { d: 'M42-297H780V0H0z', fill: '#a592c3' });
    add(g, 'path', { d: 'M42-297H251L210 0H0z', fill: '#e0ea8c' });
    add(g, 'path', { d: 'M-370 0H780V147H-370z', fill: '#f1eff3' });
    bolts.forEach((bolt, i) => {
        drawBand(g, bands[i], bands[i + 1][0]);
        drawBolt(g, bolt);
    });
    add(g, 'path', { d: 'M2-12h4V0h-4z', fill: '#ffff00' });
    add(g, 'path', { d: 'M66-297v14l-1 14M70-297v24', fill: 'none', stroke: '#5f9440' });
    add(g, 'path', { d: 'M0 0H-370V147H780V-297H42', fill: 'none', stroke: '#7f7f7f', 'stroke-width': 2 });
    add(g, 'path', { d: 'M42-297L0 0', stroke: '#7f7f7f' });
    add(g, 'path', { d: 'M-371 0h3M-371 147h3M779 147h3M779-297h3M779 0h3M-1 0h3M41-297h3M250-297h3', stroke: '#000', 'stroke-width': 3 });

    // lines to the center of rotation
    add(g, 'path', { d: 'M-550-296.5H42M-552-272L0-17', fill: 'none', stroke: '#0b7d0b' });
    add(g, 'rect', { x: -609.5, y: -299.5, width: 59, height: 27, fill: '#fff', stroke: '#000' });
    add(g, 'text', { x: -606, y: -280, fill: '#0b7d0b', class: 'fs-value' }, '0.346');

    // slope limits
    add(g, 'path', { d: 'M42.500-325v22M780.500-325v22M-369.500-29v22', stroke: '#7a9cc6' });
    add(g, 'path', { d: 'M42-313l-10-6v12zM42-313l11-6v12zM780-313l11-6v12zM-370-17l-11-6v12z', fill: '#7a9cc6' });
}

function drawRulers() {
    const axisX = 23;
    const axisY = 914;
    add(svg, 'path', { d: `M${axisX + 1} 0V${axisY}H4000`, fill: 'none', stroke: '#333', 'stroke-width': 2 });
    for (let v = -45; v <= 58; v++) {
        const x = Math.round(originX + v * scale) + 0.5;
        if (x < axisX) continue;
        add(svg, 'path', { d: `M${x} ${axisY + 3}v${v % 5 ? 2 : 5}`, stroke: '#111' });
        if (v % 10 === 0) {
            add(svg, 'text', { x, y: axisY + 18, 'text-anchor': 'middle' }, String(v));
        }
    }
    for (let v = -25; v <= 35; v++) {
        const y = Math.round(originY - 1 - v * scale) - 0.5;
        add(svg, 'path', { d: `M${axisX - 2} ${y}h${v % 5 ? -2 : -5}`, stroke: '#111' });
        if (v % 10 === 0) {
            add(svg, 'text', { transform: `translate(12 ${y}) rotate(-90)`, 'text-anchor': 'middle' }, String(v));
        }
    }
}

drawModel();
drawRulers();
```
